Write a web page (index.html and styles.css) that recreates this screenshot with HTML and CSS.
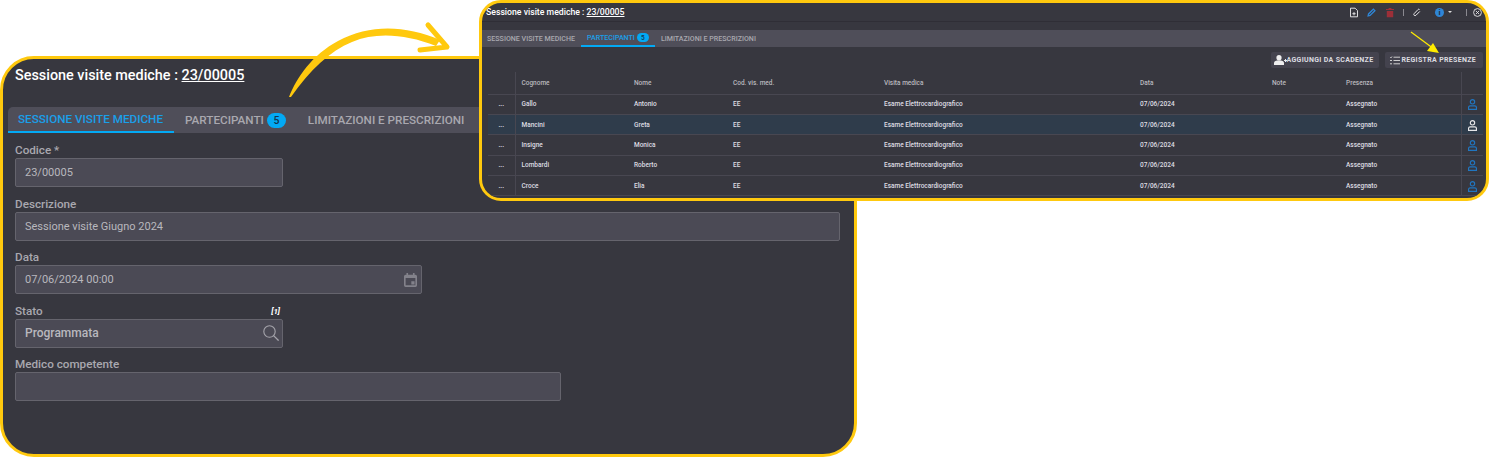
FILE: index.html
```html
<!DOCTYPE html>
<html lang="it">
<head>
    <meta charset="utf-8">
    <title>Sessione visite mediche</title>
    <link rel="stylesheet" href="styles.css">
</head>
<body>
    <section class="finestra finestra--dettaglio">
        <h1 class="titolo">Sessione visite mediche : <u>23/00005</u></h1>
        <nav class="schede">
            <a class="scheda scheda--attiva">SESSIONE VISITE MEDICHE</a>
            <a class="scheda">PARTECIPANTI <span class="conta">5</span></a>
            <a class="scheda">LIMITAZIONI E PRESCRIZIONI</a>
        </nav>
        <form class="modulo">
            <div class="campo">
                <label>Codice *</label>
                <div class="input input--corto">23/00005</div>
            </div>
            <div class="campo">
                <label>Descrizione</label>
                <div class="input input--lungo">Sessione visite Giugno 2024</div>
            </div>
            <div class="campo">
                <label>Data</label>
                <div class="input input--data">07/06/2024 00:00
                    <svg viewBox="0 0 16 17" width="13" height="14"><path fill="#83828b" fill-rule="evenodd" d="M3 0h2v2h6V0h2v2h1a2 2 0 0 1 2 2v11a2 2 0 0 1-2 2H2a2 2 0 0 1-2-2V4a2 2 0 0 1 2-2h1zM2 6v9h12V6zm7 4h4v4H9z"/></svg>
                </div>
            </div>
            <div class="campo">
                <label>Stato <i class="nota">[1]</i></label>
                <div class="input input--corto input--scelta">Programmata
                    <svg viewBox="0 0 16 16" width="16" height="16"><circle cx="6.500" cy="6.500" r="5.700" fill="none" stroke="#a5a4ab" stroke-width="1.100"/><path d="M10.600 10.600 15.600 15.600" stroke="#a5a4ab" stroke-width="1.300"/></svg>
                </div>
            </div>
            <div class="campo">
                <label>Medico competente</label>
                <div class="input input--medio"></div>
            </div>
        </form>
    </section>

    <svg class="freccia" viewBox="0 0 190 100" width="190" height="100">
        <path fill="#ffc90e" d="M9 92C17 72 32 50 58 36 90 19 125 20 160 35L156 41C125 29 96 27 72 37 50 46 30 65 11 92z"/>
        <path fill="none" stroke="#ffc90e" stroke-width="5" stroke-linecap="round" stroke-linejoin="round" d="M148 20 167 42 140 45"/>
    </svg>

    <section class="finestra finestra--lista">
        <div class="testata">
            <h2 class="titolo titolo--piccolo">Sessione visite mediche : <u>23/00005</u></h2>
            <div class="azioni">
                <svg viewBox="0 0 10 12" width="8" height="11"><path fill="none" stroke="#e6e6e8" stroke-width="1.200" d="M.6.600h5.800l3 3v7.800H.6zM3 7.500h4M5 5.500v4"/></svg>
                <svg viewBox="0 0 12 12" width="9" height="11"><path fill="none" stroke="#2f86d6" stroke-width="1.800" d="M1.500 10.500l.6-2.600L8.500 1.500l2 2-6.400 6.400z"/></svg>
                <svg class="azioni_largo" viewBox="0 0 10 12" width="8" height="11"><path fill="#9c2f38" d="M0 1.500h3l.5-1h3l.5 1h3V3H0zM1 4h8v8H1z"/></svg>
                <span class="azioni_sep"></span>
                <svg viewBox="0 0 12 12" width="8" height="11"><path fill="none" stroke="#e6e6e8" stroke-width="1.500" d="M9.800 1.500a1.500 1.500 0 0 0-2.200 0L1.800 7.600a1.800 1.800 0 0 0 2.600 2.600l5.800-5.800"/></svg>
                <span class="info">i</span>
                <span class="caret"></span>
                <span class="azioni_sep azioni_sep--dopo"></span>
                <svg class="azioni_chiudi" viewBox="0 0 12 12" width="9" height="9"><circle cx="6" cy="6" r="5.200" fill="none" stroke="#e6e6e8" stroke-width="1.200"/><path d="M3.800 3.800l4.400 4.400M8.200 3.800l-4.400 4.400" stroke="#e6e6e8" stroke-width="1.200"/></svg>
            </div>
        </div>
        <nav class="schede schede--piccole">
            <a class="scheda">SESSIONE VISITE MEDICHE</a>
            <a class="scheda scheda--attiva">PARTECIPANTI <span class="conta">5</span></a>
            <a class="scheda">LIMITAZIONI E PRESCRIZIONI</a>
        </nav>
        <div class="barra">
            <button class="bottone">
                <svg viewBox="0 0 13 10" width="13" height="10"><circle cx="5" cy="2.700" r="2.600" fill="#eee"/><path fill="#eee" d="M0 10V8c0-2 2-2.800 5-2.800S10 6 10 8v2zM10 5h1V4h1v1h1v1h-1v1h-1V6h-1z"/></svg>
                AGGIUNGI DA SCADENZE
            </button>
            <button class="bottone bottone--elenco">
                <svg viewBox="0 0 10 9" width="10" height="9"><path fill="none" stroke="#ddd" stroke-width=".900" d="M0 1.200l.8.800L2 .5M3.500 1.200H10M0 4.500h2M3.500 4.500H10M0 7.800h2M3.500 7.800H10"/></svg>
                REGISTRA PRESENZE
            </button>
        </div>
        <table class="tabella">
            <thead>
                <tr><th class="col_menu"></th><th>Cognome</th><th>Nome</th><th>Cod. vis. med.</th><th>Visita medica</th><th>Data</th><th>Note</th><th>Presenza</th><th class="col_utente"></th></tr>
            </thead>
            <tbody>
                <tr><td class="col_menu">...</td><td>Gallo</td><td>Antonio</td><td>EE</td><td>Esame Elettrocardiografico</td><td>07/06/2024</td><td></td><td>Assegnato</td><td class="col_utente"><svg class="utente" viewBox="0 0 10 12" width="9" height="11"><circle cx="5" cy="3" r="2.400" fill="none"/><path fill="none" d="M.6 11.400V9.300c0-1 .8-1.800 1.800-1.800h5.200c1 0 1.800.8 1.800 1.800v2.100z"/></svg></td></tr>
                <tr class="riga--selezionata"><td class="col_menu">...</td><td>Mancini</td><td>Greta</td><td>EE</td><td>Esame Elettrocardiografico</td><td>07/06/2024</td><td></td><td>Assegnato</td><td class="col_utente"><svg class="utente" viewBox="0 0 10 12" width="9" height="11"><circle cx="5" cy="3" r="2.400" fill="none"/><path fill="none" d="M.6 11.400V9.300c0-1 .8-1.800 1.800-1.800h5.200c1 0 1.800.8 1.800 1.800v2.100z"/></svg></td></tr>
                <tr><td class="col_menu">...</td><td>Insigne</td><td>Monica</td><td>EE</td><td>Esame Elettrocardiografico</td><td>07/06/2024</td><td></td><td>Assegnato</td><td class="col_utente"><svg class="utente" viewBox="0 0 10 12" width="9" height="11"><circle cx="5" cy="3" r="2.400" fill="none"/><path fill="none" d="M.6 11.400V9.300c0-1 .8-1.800 1.800-1.800h5.200c1 0 1.800.8 1.800 1.800v2.100z"/></svg></td></tr>
                <tr><td class="col_menu">...</td><td>Lombardi</td><td>Roberto</td><td>EE</td><td>Esame Elettrocardiografico</td><td>07/06/2024</td><td></td><td>Assegnato</td><td class="col_utente"><svg class="utente" viewBox="0 0 10 12" width="9" height="11"><circle cx="5" cy="3" r="2.400" fill="none"/><path fill="none" d="M.6 11.400V9.300c0-1 .8-1.800 1.800-1.800h5.200c1 0 1.800.8 1.800 1.800v2.100z"/></svg></td></tr>
                <tr><td class="col_menu">...</td><td>Croce</td><td>Elia</td><td>EE</td><td>Esame Elettrocardiografico</td><td>07/06/2024</td><td></td><td>Assegnato</td><td class="col_utente"><svg class="utente" viewBox="0 0 10 12" width="9" height="11"><circle cx="5" cy="3" r="2.400" fill="none"/><path fill="none" d="M.6 11.400V9.300c0-1 .8-1.800 1.800-1.800h5.200c1 0 1.800.8 1.800 1.800v2.100z"/></svg></td></tr>
            </tbody>
        </table>
        <svg class="puntatore" viewBox="0 0 34 26" width="34" height="26">
            <path d="M1 1 24 18" stroke="#ffec00" stroke-width="1.200"/>
            <path fill="#ffec00" d="M29 22 17 20 23 12z"/>
        </svg>
    </section>
</body>
</html>
```

FILE: styles.css
```css
* {
    padding: 0;
    margin: 0;
    box-sizing: border-box;
}

body {
    width: 1489px;
    height: 457px;
    position: relative;
    overflow: hidden;
    background-color: #fff;
    font-family: Roboto, "Liberation Sans", sans-serif;
    color: #b9b8be;
}

.finestra {
    position: absolute;
    background-color: #37373f;
    border: 3px solid #ffc90e;
    overflow: hidden;
}

.finestra--dettaglio {
    left: 0;
    top: 56px;
    width: 857px;
    height: 401px;
    border-radius: 34px;
    padding: 7px 5px;
}

.finestra--lista {
    left: 479px;
    top: 0;
    width: 1010px;
    height: 201px;
    border-radius: 22px;
}

.freccia {
    position: absolute;
    left: 280px;
    top: 5px;
}

.titolo {
    font-size: 14.400px;
    line-height: 20px;
    font-weight: 500;
    color: #fff;
    padding-left: 7px;
}

.titolo--piccolo {
    font-size: 8.700px;
    line-height: 14px;
    padding-left: 0;
}

/* schede */
.schede {
    display: flex;
    height: 26px;
    margin-top: 21px;
    background-color: #4f4e59;
    border-radius: 5px 0 0 0;
    font-size: 11.700px;
    font-weight: 500;
}

.scheda {
    display: flex;
    align-items: center;
    gap: 3px;
    padding: 0 11px;
    color: #a9a8af;
}

.scheda:first-child {
    padding-left: 10px;
}

.scheda--attiva {
    color: #1a9fe8;
    border-bottom: 2px solid #03a9f4;
}

.conta {
    display: inline-flex;
    align-items: center;
    justify-content: center;
    width: 19px;
    height: 15px;
    border-radius: 8px;
    background-color: #03a9f4;
    color: #12334d;
    font-size: 10.500px;
}

.schede--piccole {
    height: 17px;
    margin-top: 8px;
    border-radius: 0;
    font-size: 7.100px;
}

.schede--piccole .scheda {
    gap: 2px;
    padding: 0 6px;
}

.schede--piccole .scheda:first-child {
    padding-left: 5px;
}

.schede--piccole .conta {
    width: 12px;
    height: 9px;
    font-size: 6.500px;
}

/* modulo */
.modulo {
    display: flex;
    flex-direction: column;
    gap: 9.500px;
    margin-top: 10px;
    padding-left: 7px;
}

.campo label {
    display: flex;
    justify-content: space-between;
    width: 265px;
    font-size: 11.700px;
    line-height: 15px;
    font-weight: 500;
    color: #a9a8af;
}

.input {
    display: flex;
    align-items: center;
    justify-content: space-between;
    height: 29px;
    padding: 0 3px 0 9px;
    background-color: #4b4a55;
    border: 1px solid #65646d;
    border-radius: 2px;
    font-size: 11px;
    color: #b9b8be;
}

.input--corto { width: 268px; }
.input--lungo { width: 825px; }
.input--data { width: 407px; padding-right: 4px; }
.input--medio { width: 546px; }

.input--scelta {
    font-size: 12px;
    font-weight: 500;
}

.nota {
    font-size: 8px;
    font-weight: 700;
    color: #fff;
    align-self: flex-end;
}

/* lista */
.testata {
    display: flex;
    justify-content: space-between;
    align-items: center;
    height: 19px;
    padding: 0 4px 0 4px;
    border-bottom: 1px solid #2f2e36;
}

.azioni {
    display: flex;
    align-items: center;
    gap: 9px;
}

.azioni_largo {
    margin-left: 1px;
}

.azioni_sep {
    width: 1px;
    height: 7px;
    background-color: #8a8990;
}

.azioni_sep--dopo {
    margin-left: 5px;
}

.azioni_chiudi {
    margin-left: -3px;
}

.info {
    width: 9px;
    height: 9px;
    margin-left: 5px;
    border-radius: 50%;
    background-color: #2f86d6;
    color: #22303f;
    font-size: 8px;
    line-height: 9px;
    font-weight: 700;
    text-align: center;
}

.caret {
    margin-left: -5px;
    border: 2px solid transparent;
    border-top-color: #ddd;
    border-bottom-width: 0;
}

.barra {
    display: flex;
    justify-content: flex-end;
    gap: 6px;
    padding: 5px 3px 0 0;
    height: 25px;
}

.bottone {
    display: flex;
    align-items: center;
    gap: 0;
    height: 16px;
    padding: 0 6px 0 3px;
    background-color: #44434e;
    border: none;
    border-radius: 2px;
    color: #dcdce0;
    font-family: Roboto, sans-serif;
    font-size: 7px;
    font-weight: 700;
    letter-spacing: .32px;
}

.bottone--elenco {
    gap: 1px;
    padding: 0 7px 0 5px;
}

.tabella {
    width: 995px;
    margin-left: 6px;
    border-collapse: collapse;
    table-layout: fixed;
    font-size: 6.500px;
    font-weight: 500;
    color: #dedde2;
}

.tabella th {
    height: 22px;
    text-align: left;
    font-weight: 500;
    color: #b9b8be;
    padding-left: 6px;
    border-bottom: 1px solid #484751;
}

.tabella td {
    height: 20.400px;
    padding-left: 6px;
    border-bottom: 1px solid #484751;
}

.tabella th:nth-child(2) { width: 113px; }
.tabella th:nth-child(3) { width: 99px; }
.tabella th:nth-child(4) { width: 151px; }
.tabella th:nth-child(5) { width: 256px; }
.tabella th:nth-child(6) { width: 132px; }
.tabella th:nth-child(7) { width: 74px; }
.tabella th:nth-child(8) { width: 121px; }

.tabella .col_menu {
    width: 27px;
    padding: 0;
    text-align: center;
    border-right: 1px solid #484751;
    font-weight: 700;
}

.tabella .col_utente {
    width: 22px;
    padding: 3px 0 0;
    text-align: center;
    border-left: 1px solid #484751;
}

.riga--selezionata td {
    background-color: #2f3c4b;
}

.utente {
    stroke: #2176c0;
    stroke-width: 1.300;
}

.riga--selezionata .utente {
    stroke: #e6e6e8;
}

.puntatore {
    position: absolute;
    left: 928px;
    top: 28px;
}
```
